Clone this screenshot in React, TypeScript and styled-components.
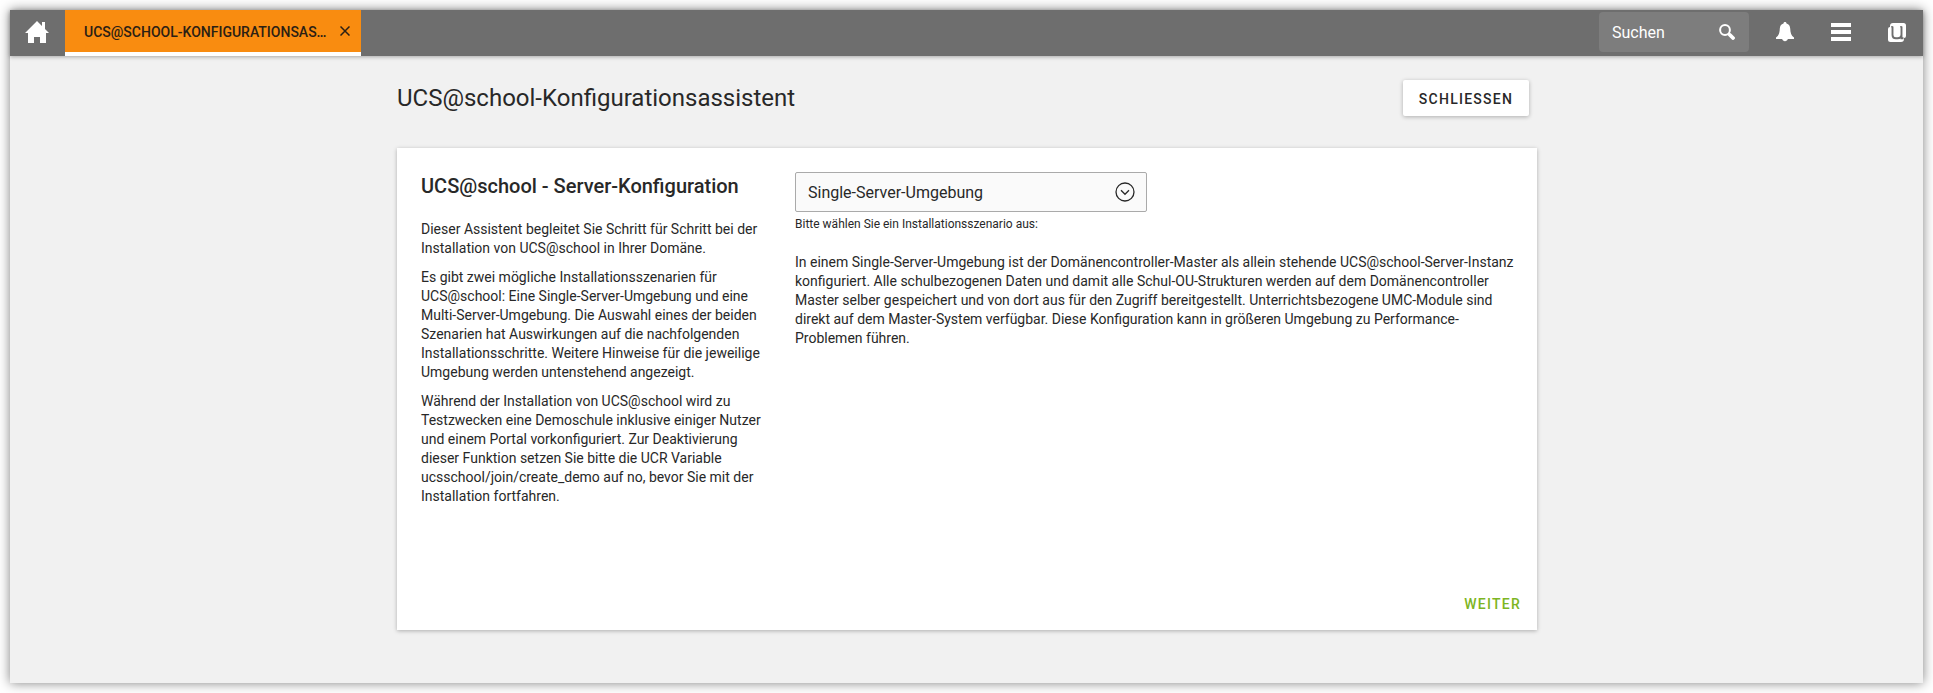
import React from 'react';
import styled, { createGlobalStyle } from 'styled-components';

const GlobalStyle = createGlobalStyle`
  * { box-sizing: border-box; }
  body {
    margin: 0;
    background: #fff;
    color: #282828;
    font: 14px/19px Roboto, "Liberation Sans", sans-serif;
  }
  button { font-family: inherit; color: inherit; border: 0; cursor: pointer; }
  svg { display: block; }
`;

const Page = styled.div`
  height: 693px;
  padding: 10px;
  overflow: hidden;
`;

const Shell = styled.div`
  height: 673px;
  display: flex;
  flex-direction: column;
  background: #f1f1f1;
  box-shadow: 0 0 11px rgba(0, 0, 0, 0.5);
`;

const Header = styled.header`
  flex: 0 0 46px;
  display: flex;
  background: #6e6e6e;
  box-shadow: 0 1px 4px rgba(0, 0, 0, 0.3);
`;

const HomeButton = styled.button`
  width: 55px;
  padding: 0 0 2px 15px;
  display: flex;
  align-items: center;
  background: none;
`;

const Tab = styled.div`
  width: 296px;
  padding: 0 11px 0 19px;
  display: flex;
  align-items: center;
  justify-content: space-between;
  background: #f98c10;
  border-bottom: 4px solid #fff;
  color: #2b2014;
`;

const TabTitle = styled.span`
  font-size: 14px;
  font-weight: 500;
  text-transform: uppercase;
  white-space: nowrap;
  padding-top: 2px;
`;

const HeaderTools = styled.div`
  margin-left: auto;
  padding: 2px 17px 4px 0;
  display: flex;
  align-items: center;
`;

const Search = styled.label`
  width: 150px;
  height: 40px;
  margin-right: 27px;
  padding: 0 14px 0 13px;
  display: flex;
  align-items: center;
  justify-content: space-between;
  background: #7d7d7d;
  border-radius: 4px;
  color: #fff;
  font-size: 16px;
`;

const ToolButton = styled.button<{ $gap?: number }>`
  padding: 0;
  margin-right: ${(p) => p.$gap ?? 0}px;
  background: none;
`;

const Content = styled.main`
  width: 1140px;
  margin-left: 387px;
`;

const TitleBar = styled.div`
  height: 92px;
  padding: 24px 8px 0 0;
  display: flex;
  justify-content: space-between;
  align-items: flex-start;
`;

const PageTitle = styled.h1`
  margin: 0;
  font-size: 24px;
  font-weight: 400;
  line-height: 36px;
`;

const CloseButton = styled.button`
  width: 126px;
  height: 36px;
  padding: 2px 0 0;
  background: #fff;
  border-radius: 2px;
  box-shadow: 0 1px 4px rgba(0, 0, 0, 0.28);
  font-size: 14px;
  font-weight: 500;
  letter-spacing: 1.25px;
`;

const Card = styled.section`
  height: 482px;
  padding: 24px;
  display: flex;
  flex-direction: column;
  justify-content: space-between;
  background: #fff;
  box-shadow: 0 1px 4px rgba(0, 0, 0, 0.28);
`;

const Columns = styled.div`
  display: grid;
  grid-template-columns: 344px 720px;
  column-gap: 30px;
`;

const Heading = styled.h2`
  margin: 0 0 19px;
  font-size: 20px;
  font-weight: 500;
  line-height: 29px;
`;

const Paragraph = styled.p`
  margin: 0 0 10px;
`;

const Select = styled.button`
  width: 352px;
  height: 40px;
  padding: 0 11px 0 12px;
  display: flex;
  align-items: center;
  justify-content: space-between;
  background: #fafafa;
  border: 1px solid #aaa;
  border-radius: 2px;
  font-size: 16px;
`;

const Hint = styled.div`
  margin: 3px 0 19px;
  font-size: 12px;
`;

const Footer = styled.footer`
  display: flex;
  justify-content: flex-end;
  margin: 0 -8px -15px 0;
`;

const NextButton = styled.button`
  height: 36px;
  padding: 2px 0 0;
  background: none;
  color: #7db523;
  font-size: 14px;
  font-weight: 500;
  letter-spacing: 1.25px;
`;

const HomeIcon = () => (
  <svg width="24" height="22" viewBox="0 0 24 22" fill="#fff">
    <path d="M12 0 0 12h3v10h6v-6h6v6h6V12h3l-4-4V1h-3v4z" />
  </svg>
);

const CloseIcon = () => (
  <svg width="10" height="10" viewBox="0 0 10 10" stroke="#2b2014" strokeWidth="1.5">
    <path d="M.5.5l9 9M9.5.5l-9 9" />
  </svg>
);

const SearchIcon = () => (
  <svg width="16" height="16" viewBox="0 0 16 16" fill="none" stroke="#fff">
    <circle cx="6" cy="6" r="4.9" strokeWidth="2" />
    <path d="M9.5 9.5l1.8 1.8" strokeWidth="2" />
    <path d="M11 11l3 3" strokeWidth="3.8" strokeLinecap="round" />
  </svg>
);

const BellIcon = () => (
  <svg width="18" height="20" viewBox="0 0 18 20" fill="#fff">
    <path d="M9 0c1 0 1.4.6 1.5 1.400C13 2 14 4 14.200 6.500c.2 4.500 1 7 3.800 9V17h-6.200c-.3 1.300-1.400 2.200-2.800 2.200S6.500 18.300 6.200 17H0v-1.500c2.800-2 3.600-4.500 3.800-9C4 4 5 2 7.500 1.400 7.600.6 8 0 9 0z" />
  </svg>
);

const MenuIcon = () => (
  <svg width="20" height="18" viewBox="0 0 20 18" fill="#fff">
    <path d="M0 0h20v4H0zM0 7h20v4H0zM0 14h20v4H0z" />
  </svg>
);

const UniventionIcon = () => (
  <svg width="18" height="19" viewBox="0 0 18 19" fill="none">
    <path d="M5 0h10.500Q18 0 18 2.500V13q0 2-2 2v1q0 3-3 3H2.500Q0 19 0 16.500V6q0-2 2-2V3q0-3 3-3z" fill="#fff" />
    <path d="M4.500 3.500v8.500q0 3.300 3.300 3.300h1.700q4 0 4-4V3.500M13.500 11v4.300h2" stroke="#6e6e6e" strokeWidth="1.900" />
    <path d="M3 3.800h2M12 3.800h2" stroke="#6e6e6e" strokeWidth="1" />
  </svg>
);

const DropdownIcon = () => (
  <svg width="20" height="20" viewBox="0 0 20 20" fill="none" stroke="#282828" strokeWidth="1.300">
    <circle cx="10" cy="10" r="9" />
    <path d="M6 8.300l4 4 4-4" />
  </svg>
);

export default function App() {
  return (
    <Page>
      <GlobalStyle />
      <Shell>
        <Header>
          <HomeButton aria-label="Start"><HomeIcon /></HomeButton>
          <Tab>
            <TabTitle>UCS@school-Konfigurationsas…</TabTitle>
            <CloseIcon />
          </Tab>
          <HeaderTools>
            <Search>Suchen<SearchIcon /></Search>
            <ToolButton $gap={37}><BellIcon /></ToolButton>
            <ToolButton $gap={37}><MenuIcon /></ToolButton>
            <ToolButton><UniventionIcon /></ToolButton>
          </HeaderTools>
        </Header>
        <Content>
          <TitleBar>
            <PageTitle>UCS@school-Konfigurationsassistent</PageTitle>
            <CloseButton>SCHLIESSEN</CloseButton>
          </TitleBar>
          <Card>
            <Columns>
              <div>
                <Heading>UCS@school - Server-Konfiguration</Heading>
                <Paragraph>
                  Dieser Assistent begleitet Sie Schritt für Schritt bei der Installation von UCS@school in Ihrer Domäne.
                </Paragraph>
                <Paragraph>
                  Es gibt zwei mögliche Installationsszenarien für UCS@school: Eine Single-Server-Umgebung und eine
                  Multi-Server-Umgebung. Die Auswahl eines der beiden Szenarien hat Auswirkungen auf die nachfolgenden
                  Installationsschritte. Weitere Hinweise für die jeweilige Umgebung werden untenstehend angezeigt.
                </Paragraph>
                <Paragraph>
                  Während der Installation von UCS@school wird zu Testzwecken eine Demoschule inklusive einiger Nutzer
                  und einem Portal vorkonfiguriert. Zur Deaktivierung dieser Funktion setzen Sie bitte die UCR Variable
                  ucsschool/join/create_demo auf no, bevor Sie mit der Installation fortfahren.
                </Paragraph>
              </div>
              <div>
                <Select>Single-Server-Umgebung<DropdownIcon /></Select>
                <Hint>Bitte wählen Sie ein Installationsszenario aus:</Hint>
                <Paragraph>
                  In einem Single-Server-Umgebung ist der Domänencontroller-Master als allein stehende
                  UCS@school-Server-Instanz konfiguriert. Alle schulbezogenen Daten und damit alle Schul-OU-Strukturen
                  werden auf dem Domänencontroller Master selber gespeichert und von dort aus für den Zugriff
                  bereitgestellt. Unterrichtsbezogene UMC-Module sind direkt auf dem Master-System verfügbar. Diese
                  Konfiguration kann in größeren Umgebung zu Performance-Problemen führen.
                </Paragraph>
              </div>
            </Columns>
            <Footer><NextButton>WEITER</NextButton></Footer>
          </Card>
        </Content>
      </Shell>
    </Page>
  );
}
